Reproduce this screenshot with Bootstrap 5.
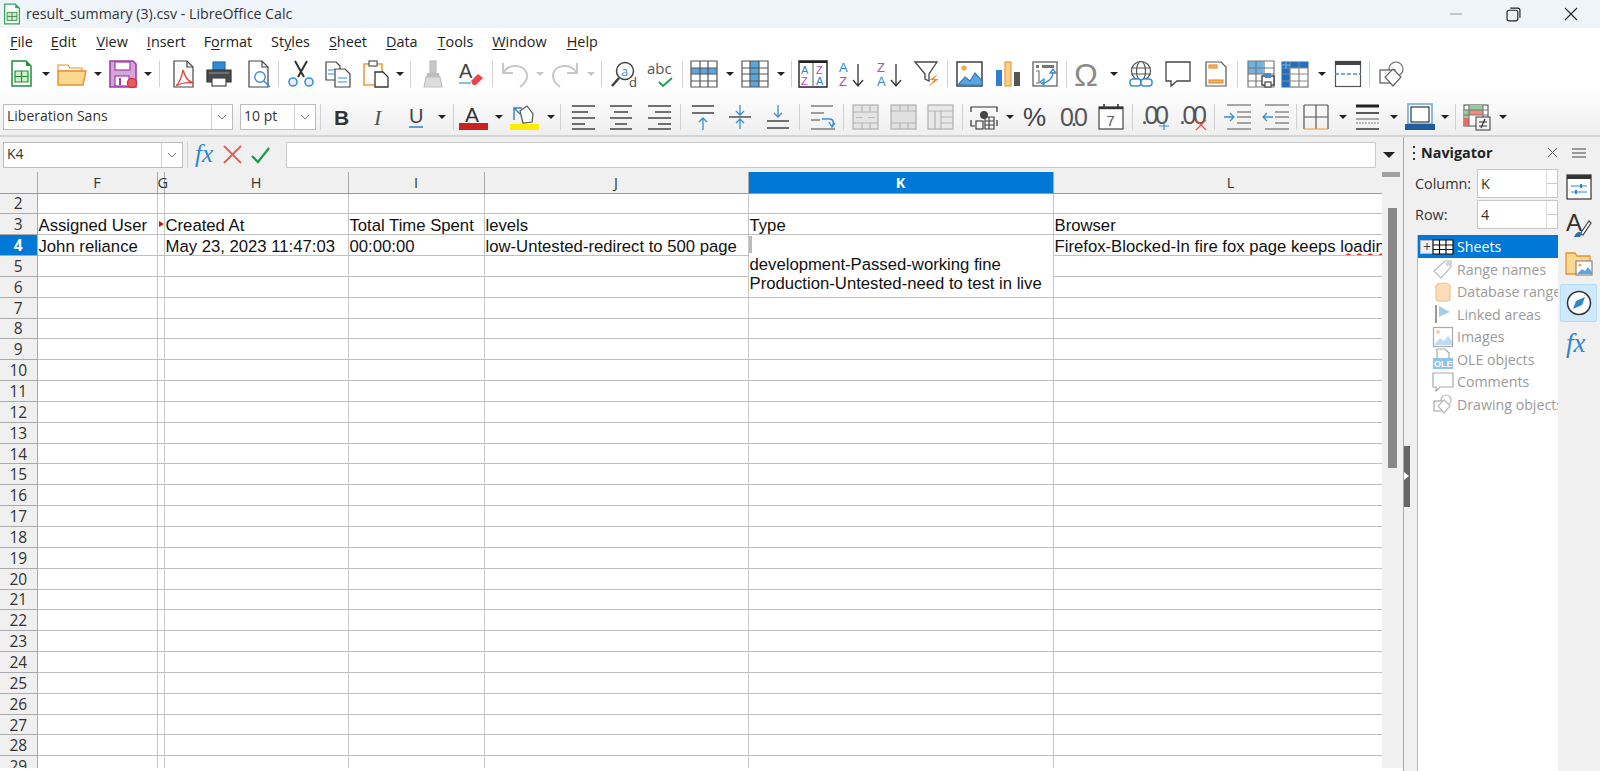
<!DOCTYPE html>
<html lang="en"><head><meta charset="utf-8"><title>result_summary (3).csv - LibreOffice Calc</title>
<link href="https://cdn.jsdelivr.net/npm/bootstrap@5.3.0/dist/css/bootstrap.min.css" rel="stylesheet">
<style>
html,body{height:771px;overflow:hidden;background:#fff;color:#222;font-family:"Open Sans","Noto Sans",sans-serif}
.titlebar{height:28px;background:#eff4fa;font-size:14.2px;padding-left:3px}
.titlebar .ttl{margin-left:5px;color:#333}
.tapp{width:18px;height:22px;flex:none}
.wins{margin-left:auto;padding-right:22px;gap:43px}
.chrome{height:109px;background:linear-gradient(#fff 55%,#efefef);border-bottom:2px solid #d4d4d4}
.menubar{height:28px;font-size:14.4px;padding-left:10px;gap:0}
.menubar span{color:#222}
.menubar u{text-underline-offset:2px}
.tb{height:36px}
.tb2{height:45px;padding-top:5px}
.ic{width:26px;height:26px;flex:none;overflow:visible;fill:none;stroke-width:1.2}
.ic text{stroke:none}
.dn{flex:none;width:0;height:0;border-left:4px solid transparent;border-right:4px solid transparent;border-top:4px solid #222}
.dn.off{border-top-color:#c6c6c6}
.vs{flex:none;width:1px;height:26px;background:#d0d0d0}
.gm2{margin-left:-2px}.g2{margin-left:2px}
.g4{margin-left:4px}.g5{margin-left:5px}.g6{margin-left:6px}.g7{margin-left:7px}.g8{margin-left:8px}.g9{margin-left:9px}.g10{margin-left:10px}.g11{margin-left:11px}.g12{margin-left:12px}.g13{margin-left:13px}.g14{margin-left:14px}
.combo{height:26px;background:#fff;border:1px solid #bdbdbd;font-size:14px;color:#333;flex:none}
.combo .val{flex:1;padding-left:3px;white-space:nowrap;overflow:hidden}
.combo .drop{width:21px;border-left:1px solid #d0d0d0}
.c-font{width:230px;margin-left:3px}.c-size{width:76px}.c-name{width:180px;margin-left:3px}
.work{height:634px}
.left-col{width:1403px;flex:none}
.fbar{height:35px;background:#f0f0f0}
.finput{width:1090px;height:26px;background:#fff;border:1px solid #c8c8c8;border-radius:1px}
.gridwrap{width:1382px;height:596px;flex:none}
.scrollv{width:21px;background:#f0f0f0;padding-left:6px}
.scrollv .stop{height:5px;width:18px;margin-left:-6px;background:#a0a0a0}
.scrollv .thumb{width:9px;height:260px;margin-top:31px;background:#888}
table.sheet{table-layout:fixed;width:1382px;border-collapse:collapse;margin:0;font-family:"Liberation Sans",Arial,sans-serif;font-size:16.7px;color:#111;--bs-table-bg:transparent}
table.sheet th,table.sheet td{padding:2px 0 0 1px;border:0;border-right:1px solid #c8c8c8;border-bottom:1px solid #c0c0c0;height:20.85px;line-height:17px;white-space:nowrap;overflow:hidden;vertical-align:middle;font-weight:400}
table.sheet thead th{height:21px;background:#f0f0f0;text-align:center;padding:0;font-family:"Open Sans",sans-serif;font-size:14.5px;color:#333;border-bottom:1px solid #999;border-right:1px solid #aaa}
table.sheet thead th.spill{overflow:visible;font-size:14.5px}
table.sheet thead th.wide{padding-left:26px}
table.sheet tbody th{background:#f0f0f0;text-align:center;padding:1px 0 0;font-family:"Open Sans",sans-serif;font-size:15.5px;color:#333;border-right:1px solid #aaa;border-bottom:1px solid #aaa}
table.sheet .act,table.sheet tbody th.act,table.sheet thead th.act{background:#0078d7;color:#fff;font-weight:700}
table.sheet td.tall{vertical-align:top;padding-top:1px;line-height:19px}
.caretbar{display:inline-block;width:3px;height:17px;background:#bbb;margin-left:-1px;vertical-align:top}
.wavy{text-decoration:underline wavy #e5322c 1.5px;text-underline-offset:1px}
.flag{position:relative}
.flag::before{content:"";position:absolute;right:0;top:7px;border-left:5px solid #d01010;border-top:3.5px solid transparent;border-bottom:3.5px solid transparent}
.side{width:197px;flex:none;background:#f0f0f0;border-left:1px solid #aaa;position:relative;height:634px}
.grip{position:absolute;left:0;top:309px;width:6px;height:61px;background:#666}
.grip::after{content:"";position:absolute;left:0;top:26px;border-left:5px solid #fff;border-top:4px solid transparent;border-bottom:4px solid transparent}
.deck{width:154px;flex:none}
.deckhead{height:31px;padding-left:9px;font-size:14.4px;font-weight:700;color:#222}
.dots{width:2px;height:14px;margin-right:6px;background:repeating-linear-gradient(#333 0 2px,transparent 2px 6px)}
.deckbody{padding-left:11px;height:603px}
.frow{height:31px;font-size:14.4px;color:#333}
.frow label{width:62px}
.spin{width:82px;height:29px;background:#fff;border:1px solid #c8c8c8;padding-left:3px;margin-left:1px;position:relative}
.spin::after{content:"";position:absolute;right:0;top:0;bottom:0;width:11px;border-left:1px solid #ddd;background:linear-gradient(#fff 47%,#ccc 47%,#ccc 53%,#fff 53%)}
.tree{flex:1;width:142px;margin:5px 0 -60px 2px;background:#fff;border-left:1px solid #bbb;font-size:14.2px;color:#9b9b9b}
.tree .leaf{height:22.5px;padding-left:15px;gap:4px;white-space:nowrap;overflow:hidden}
.tree .sel{background:#0078d7;color:#fff;padding-left:2px;height:23px}
.tree .ic{width:20px;height:20px}
.pm{width:14px;height:14px;background:#eee;border:1px solid #bbb;color:#444;font-size:14px;line-height:11px;text-align:center;flex:none;margin-right:-5px}
.tabs{width:42px;flex:none;gap:0}
.tabs .cell{height:38px;width:37px;margin-left:2px;flex:none}
.tabs .on{background:#cde8ff;border:1px solid #b4dcfb;border-radius:2px;margin-top:2px;margin-bottom:3px}
.tabhead{height:31px;width:42px}
.c0{width:37px}.c1{width:120px}.c2{width:7px}.c3{width:184px}.c4{width:136px}.c5{width:264px}.c6{width:305px}.c7{width:329px}
.mi-file{margin-right:18px}.mi-view{margin-left:20px}.mi-ins{margin-left:19px}.mi-for{margin-left:18px}.mi-sty{margin-left:19px}.mi-she{margin-left:19px}.mi-dat{margin-left:19px}.mi-too{margin-left:20px}.mi-win{margin-left:19px}.mi-hel{margin-left:20px}
.tri-big{border-left-width:6px;border-right-width:6px;border-top-width:6px}
</style></head><body>
<div class="d-flex flex-column">
<div class="titlebar d-flex align-items-center">
<svg class="tapp" viewBox="2 0 22 26" fill="none"><path d="M4 1h13l5 5v19H4z" fill="#fff" stroke="#34a853" stroke-width="1.6"/><path d="M17 1l5 5h-5z" fill="#34a853"/><path d="M7 11h12v10H7zM7 16h12M13 11v10" stroke="#2f7d45" fill="#cfe8c8"/></svg>
<span class="ttl">result_summary (3).csv - LibreOffice Calc</span>
<div class="wins d-flex align-items-center">
<svg width="14" height="14" viewBox="0 0 14 14" fill="none" stroke="#999"><path d="M1 7h12"/></svg>
<svg width="15" height="15" viewBox="0 0 14 14" fill="none" stroke="#222" stroke-width="1.1"><rect x="1" y="3" width="10" height="10" rx="2"/><path d="M4 1h7a2 2 0 0 1 2 2v7"/></svg>
<svg width="14" height="14" viewBox="0 0 14 14" fill="none" stroke="#222" stroke-width="1.1"><path d="M1 1l12 12M13 1L1 13"/></svg>
</div></div>
<div class="chrome">
<div class="menubar d-flex align-items-center">
<span class="mi-file"><u>F</u>ile</span><span><u>E</u>dit</span><span class="mi-view"><u>V</u>iew</span><span class="mi-ins"><u>I</u>nsert</span><span class="mi-for">F<u>o</u>rmat</span><span class="mi-sty">St<u>y</u>les</span><span class="mi-she"><u>S</u>heet</span><span class="mi-dat"><u>D</u>ata</span><span class="mi-too"><u>T</u>ools</span><span class="mi-win"><u>W</u>indow</span><span class="mi-hel"><u>H</u>elp</span>
</div>
<div class="tb d-flex align-items-center ps-2">
<svg class="ic" viewBox="0 0 26 26"><path d="M4 0h14l5 5v20H4z" fill="#fff" stroke="#1e8f3a" stroke-width="1.5"/><path d="M18 0l5 5h-5z" fill="#1e8f3a"/><path d="M7 10h13v11H7z" fill="#d5ebcf" stroke="#1e8f3a"/><path d="M7 15.5h13M13.5 10v11" stroke="#1e8f3a"/></svg>
<i class="dn g8"></i>
<svg class="ic g9" viewBox="0 0 26 26"><path d="M-1 4h10l2 3h12v3H-1z" fill="#fff" stroke="#e8912d"/><path d="M-1 10h28l-3 14H-1z" fill="#fbd88f" stroke="#e8912d" stroke-width="1.4"/></svg>
<i class="dn g9"></i>
<svg class="ic g8" viewBox="0 0 26 26"><path d="M0 0h23l3 3v23H0z" fill="#d4a5d9" stroke="#a03ea8" stroke-width="1.6"/><rect x="5" y="1" width="15" height="8" fill="#fff" stroke="#a03ea8"/><rect x="5" y="15" width="14" height="10" fill="#fff" stroke="#a03ea8"/><path d="M10 17v7" stroke="#a03ea8" stroke-width="2"/><circle cx="22" cy="22" r="4.6" fill="#f0565b" stroke="#c8323a"/></svg>
<i class="dn g8"></i><i class="vs g7"></i>
<svg class="ic g11" viewBox="0 0 26 26"><path d="M3 0h13l6 6v20H3z" fill="#fff" stroke="#444"/><path d="M16 0v6h6" stroke="#444"/><path d="M12 9c2 6 4 11 10 13-6-1-12 0-17 3 4-4 6-10 7-16z" stroke="#e04a3f" stroke-width="1.4"/></svg>
<svg class="ic g9" viewBox="0 0 26 26"><rect x="7" y="1" width="12" height="8" fill="#2e8bd6" stroke="#1d6fb3"/><path d="M1 9h24v12H1z" fill="#4a4a4a" stroke="#333"/><rect x="6" y="17" width="14" height="8" fill="#fff" stroke="#444"/><path d="M3 12h20" stroke="#888"/></svg>
<svg class="ic g14" viewBox="0 0 26 26"><path d="M3 0h13l6 6v20H3z" fill="#fff" stroke="#444"/><path d="M16 0v6h6" stroke="#444"/><circle cx="14" cy="16" r="5.2" stroke="#3a8fd6" stroke-width="1.4"/><path d="M18 20l6 6" stroke="#3a8fd6" stroke-width="1.6"/></svg>
<i class="vs g6"></i>
<svg class="ic g9" viewBox="0 0 26 26"><path d="M7 0l9 16M19 0L10 16" stroke="#333" stroke-width="2"/><circle cx="5" cy="21" r="4" fill="#e4f0fa" stroke="#3a8fd6" stroke-width="1.6"/><circle cx="21" cy="21" r="4" fill="#e4f0fa" stroke="#3a8fd6" stroke-width="1.6"/></svg>
<svg class="ic g11" viewBox="0 0 26 26"><path d="M1 1h10l4 4v14H1z" fill="#fff" stroke="#444"/><path d="M10 8h10l5 5v13H10z" fill="#fff" stroke="#444"/><path d="M3 9h7M3 13h7" stroke="#3a8fd6"/><path d="M13 17h9M13 21h9" stroke="#3a8fd6"/></svg>
<svg class="ic g12" viewBox="0 0 26 26"><path d="M1 3h18v21H1z" fill="#fff" stroke="#ef9a3c" stroke-width="1.6"/><rect x="6" y="0" width="8" height="5" fill="#fff" stroke="#555"/><path d="M12 11h8l5 5v10H12z" fill="#fff" stroke="#333" stroke-width="1.3"/></svg>
<i class="dn g7"></i><i class="vs g6"></i>
<svg class="ic g9" viewBox="0 0 26 26"><rect x="10" y="0" width="6" height="12" fill="#c8c8c8" stroke="#bbb"/><path d="M7 12h12l1 4H6z" fill="#bdbdbd"/><path d="M6 16h14l2 10H4z" fill="#dcdcdc" stroke="#c0c0c0"/></svg>
<svg class="ic g12" viewBox="0 0 26 26"><text x="1" y="17" font-family="Liberation Sans" font-size="20" fill="#444">A</text><path d="M1 22h12" stroke="#3a8fd6"/><path d="M13 20l7-7 5 4-7 7h-3z" fill="#e8434a"/></svg>
<i class="vs g8"></i>
<svg class="ic g9" viewBox="0 0 26 26"><path d="M1 2v10h10" stroke="#c8c8c8" stroke-width="2"/><path d="M1 12C7 2 22 3 25 13c1 5-2 9-7 13" stroke="#c8c8c8" stroke-width="2"/></svg>
<i class="dn off g8"></i>
<svg class="ic g8" viewBox="0 0 26 26"><path d="M25 2v10H15" stroke="#c8c8c8" stroke-width="2"/><path d="M25 12C19 2 4 3 1 13c-1 5 2 9 7 13" stroke="#c8c8c8" stroke-width="2"/></svg>
<i class="dn off g9"></i><i class="vs g6"></i>
<svg class="ic g9" viewBox="0 0 26 26"><circle cx="14" cy="10" r="8.5" stroke="#444" stroke-width="1.5"/><path d="M8 17L1 25" stroke="#444" stroke-width="2.6"/><text x="10" y="15" font-family="Open Sans" font-size="13" fill="#3a8fd6">a</text><text x="18" y="26" font-family="Open Sans" font-size="13" fill="#444">d</text></svg>
<svg class="ic g11" viewBox="0 0 26 26"><text x="-1" y="13" font-family="Open Sans" font-size="15" fill="#555">abc</text><path d="M11 21l4 4 9-8" stroke="#22a352" stroke-width="2"/></svg>
<i class="vs g8"></i>
<svg class="ic g8" viewBox="0 0 26 26"><rect x="0" y="7" width="26" height="6" fill="#5ba6df"/><path d="M0 0h26v26H0zM0 7h26M0 13h26M0 20h26M9 0v26M17 0v26" stroke="#555"/></svg>
<i class="dn g9"></i>
<svg class="ic g8" viewBox="0 0 26 26"><rect x="8" y="0" width="9" height="26" fill="#5ba6df"/><path d="M0 0h26v26H0zM0 7h26M0 13h26M0 20h26M8 0v26M17 0v26" stroke="#555"/></svg>
<i class="dn g9"></i><i class="vs g6"></i>
<svg class="ic g8" viewBox="0 0 26 26"><path d="M-1 0h28v26H-1z" fill="#fff" stroke="#222" stroke-width="1.4"/><path d="M-1 1h28" stroke="#222" stroke-width="2"/><path d="M13 2v24" stroke="#777"/><text x="1" y="13" font-size="11" font-family="Liberation Sans" fill="#2b86cf">A</text><text x="1" y="24" font-size="11" font-family="Liberation Sans" fill="#b14cc1">Z</text><text x="16" y="13" font-size="11" font-family="Liberation Sans" fill="#b14cc1">Z</text><text x="16" y="24" font-size="11" font-family="Liberation Sans" fill="#2b86cf">A</text></svg>
<svg class="ic g13" viewBox="0 0 26 26"><text x="0" y="11" font-size="13" font-family="Liberation Sans" fill="#2b86cf">A</text><text x="0" y="25" font-size="13" font-family="Liberation Sans" fill="#b14cc1">Z</text><path d="M19 3v21M14 19l5 6 5-6" stroke="#333" stroke-width="1.3"/></svg>
<svg class="ic g12" viewBox="0 0 26 26"><text x="0" y="11" font-size="13" font-family="Liberation Sans" fill="#b14cc1">Z</text><text x="0" y="25" font-size="13" font-family="Liberation Sans" fill="#2b86cf">A</text><path d="M19 3v21M14 19l5 6 5-6" stroke="#333" stroke-width="1.3"/></svg>
<svg class="ic g11" viewBox="0 0 26 26"><path d="M1 1h22l-8 12v7l-4-2v-5z" stroke="#444" stroke-width="1.3"/><path d="M24 13l-9 6h5l-6 7 11-8h-5z" fill="#f0913c"/></svg>
<i class="vs g7"></i>
<svg class="ic g9" viewBox="0 0 26 26"><rect x="0" y="1" width="25" height="24" fill="#fff" stroke="#222" stroke-width="1.3"/><circle cx="7" cy="7" r="2.6" fill="#f5a54a"/><path d="M1 24l7-8 5 4 5-8 7 8v4z" fill="#5ba6df" stroke="#2f7fc0"/></svg>
<svg class="ic g11" viewBox="0 0 26 26"><rect x="2" y="9" width="6" height="16" fill="#2e7fd1"/><rect x="11" y="1" width="6" height="24" fill="#fbd08e" stroke="#ef9a3c"/><rect x="20" y="11" width="6" height="14" fill="#555"/></svg>
<svg class="ic g12" viewBox="0 0 26 26"><rect x="1" y="1" width="24" height="24" fill="#fff" stroke="#555" stroke-width="1.2"/><path d="M4 4h3v3H4zM10 4h12v3H10z" fill="#777"/><path d="M4 10h3v12H4" stroke="#777"/><path d="M10 22a11 11 0 0 0 11-11M21 8l-3 4h6zM8 21l4-3v6z" stroke="#3a8fd6" stroke-width="1.3"/></svg>
<i class="vs g8"></i>
<svg class="ic g8" viewBox="0 0 26 26"><text x="-1" y="25" font-family="Liberation Sans" font-size="32" fill="#8a8a8a">Ω</text></svg>
<i class="dn g9"></i>
<svg class="ic g10" viewBox="0 0 26 26"><circle cx="13" cy="10" r="9.5" stroke="#555"/><ellipse cx="13" cy="10" rx="4.5" ry="9.5" stroke="#555"/><path d="M3 7h20M3 13h20" stroke="#555"/><rect x="2" y="18" width="11" height="7" rx="3" fill="#fff" stroke="#3a8fd6" stroke-width="1.5"/><rect x="13" y="18" width="11" height="7" rx="3" fill="#fff" stroke="#3a8fd6" stroke-width="1.5"/></svg>
<svg class="ic g11" viewBox="0 0 26 26"><path d="M1 1h24v19H12l-6 5v-5H1z" fill="#fff" stroke="#444" stroke-width="1.3"/></svg>
<svg class="ic g12" viewBox="0 0 26 26"><path d="M3 1h15l5 5v19H3z" fill="#fff" stroke="#555"/><rect x="6" y="4" width="8" height="3" fill="#f4b26a" stroke="#e8912d"/><rect x="6" y="19" width="14" height="3" fill="#f4b26a" stroke="#e8912d"/></svg>
<i class="vs g8"></i>
<svg class="ic g10" viewBox="0 0 26 26"><path d="M0 0h15v13H0z" fill="#6fb2e4"/><path d="M0 0h26v26H0zM0 7h26M0 13h26M0 20h26M8 0v26M16 0v26" stroke="#777"/><rect x="14" y="15" width="12" height="9" fill="#fff" stroke="#444" stroke-width="1.4"/><rect x="17" y="12" width="6" height="5" fill="#3a8fd6"/><rect x="17" y="21" width="6" height="5" fill="#fff" stroke="#444"/></svg>
<svg class="ic g8" viewBox="0 0 26 26"><rect x="0" y="1" width="26" height="25" fill="#fff" stroke="#777"/><rect x="0" y="1" width="26" height="6" fill="#1f6fc0"/><rect x="0" y="1" width="8" height="25" fill="#1f6fc0"/><path d="M0 7h26M0 13h26M0 20h26M8 1v25M17 1v25" stroke="#888"/><path d="M4 0v8M0 4h8" stroke="#5ba6df" stroke-width="1.6"/></svg>
<i class="dn g10"></i>
<svg class="ic g9" viewBox="0 0 26 26"><rect x="0.5" y="0.5" width="25" height="25" fill="#fff" stroke="#555"/><rect x="0" y="0" width="26" height="4" fill="#444"/><path d="M0 13h26" stroke="#4a90d0" stroke-width="1.6" stroke-dasharray="4 2"/></svg>
<i class="vs g8"></i>
<svg class="ic g9" viewBox="0 0 26 26"><circle cx="17" cy="8" r="7" fill="#fff" stroke="#666"/><rect x="1" y="9" width="15" height="13" fill="#fff" stroke="#555"/><path d="M14 8l8 8-8 9-8-9z" fill="#fff" stroke="#666"/></svg>
</div>
<div class="tb2 d-flex align-items-center">
<div class="combo c-font d-flex"><span class="val">Liberation Sans</span><span class="drop d-flex align-items-center justify-content-center"><svg width="10" height="6" viewBox="0 0 10 6" fill="none" stroke="#777"><path d="M1 1l4 4 4-4"/></svg></span></div>
<div class="combo c-size g7 d-flex"><span class="val">10 pt</span><span class="drop d-flex align-items-center justify-content-center"><svg width="10" height="6" viewBox="0 0 10 6" fill="none" stroke="#777"><path d="M1 1l4 4 4-4"/></svg></span></div>
<i class="vs g4"></i>
<svg class="ic g7" viewBox="0 0 26 26"><text x="6" y="21" font-family="Liberation Sans" font-weight="700" font-size="21" fill="#333">B</text></svg>
<svg class="ic g12" viewBox="0 0 26 26"><text x="8" y="21" font-family="Liberation Serif" font-style="italic" font-size="22" fill="#555">I</text></svg>
<svg class="ic g11" viewBox="0 0 26 26"><text x="6" y="19" font-family="Liberation Sans" font-size="20" fill="#444">U</text><path d="M6 23h14" stroke="#2e7fd1" stroke-width="1.5"/></svg>
<i class="dn g9"></i><i class="vs g7"></i>
<svg class="ic g6" viewBox="0 0 26 26"><text x="5" y="18" font-family="Liberation Sans" font-size="21" fill="#333">A</text><rect x="-1" y="19" width="29" height="7" fill="#c9211e"/></svg>
<i class="dn g9"></i>
<svg class="ic g8" viewBox="0 0 26 26"><path d="M9 7l7-5 6 8-1 8-9 1z" fill="#fff" stroke="#555"/><path d="M3 16V4h8M3 4l6 6" stroke="#2e7fd1" stroke-width="1.4"/><rect x="-1" y="20" width="29" height="6" fill="#ffed00"/></svg>
<i class="dn g10"></i><i class="vs g5"></i>
<svg class="ic g10" viewBox="0 0 26 26"><path d="M1 2h23M1 8h16M1 14h23M1 20h13M1 25h23" stroke="#444" stroke-width="1.3"/></svg>
<svg class="ic g11" viewBox="0 0 26 26"><path d="M2 2h22M6 8h14M2 14h22M7 20h12M2 25h22" stroke="#444" stroke-width="1.3"/></svg>
<svg class="ic g12" viewBox="0 0 26 26"><path d="M2 2h23M9 8h16M2 14h23M12 20h13M2 25h23" stroke="#444" stroke-width="1.3"/></svg>
<i class="vs g8"></i>
<svg class="ic g9" viewBox="0 0 26 26"><path d="M2 2h22M2 9h22" stroke="#444" stroke-width="1.4"/><path d="M13 26V14M9 18l4-4 4 4" stroke="#3a8fd6" stroke-width="1.3"/></svg>
<svg class="ic g11" viewBox="0 0 26 26"><path d="M2 13h22" stroke="#444" stroke-width="1.4"/><path d="M13 1v9M9 7l4 4 4-4M13 25v-9M9 19l4-4 4 4" stroke="#3a8fd6" stroke-width="1.3"/></svg>
<svg class="ic g12" viewBox="0 0 26 26"><path d="M2 17h22M2 24h22" stroke="#444" stroke-width="1.4"/><path d="M13 1v12M9 9l4 4 4-4" stroke="#3a8fd6" stroke-width="1.3"/></svg>
<i class="vs g8"></i>
<svg class="ic g10" viewBox="0 0 26 26"><path d="M1 2h22M1 9h13M1 16h9M1 25h24" stroke="#444" stroke-width="1.2"/><path d="M12 15h8c4 0 4 6 2 7M19 18l3 5 3-4" stroke="#3a8fd6" stroke-width="1.4"/></svg>
<i class="vs g7"></i>
<svg class="ic g9" viewBox="0 0 26 26"><rect x="0" y="1" width="25" height="24" fill="#e4e4e4" stroke="#b4b4b4" stroke-width="1.3"/><path d="M0 8h25M0 19h25M9 1v7M17 1v7M9 19v6M17 19v6" stroke="#b4b4b4"/><path d="M3 13.5h7M15 13.5h7" stroke="#bbb"/></svg>
<svg class="ic g12" viewBox="0 0 26 26"><rect x="0" y="1" width="25" height="24" fill="#e0e0e0" stroke="#b4b4b4" stroke-width="1.3"/><path d="M0 7h25M0 19h25M9 1v6M17 1v6M9 19v6M17 19v6" stroke="#b4b4b4"/></svg>
<svg class="ic g11" viewBox="0 0 26 26"><rect x="0" y="1" width="25" height="24" fill="#e8e8e8" stroke="#b4b4b4" stroke-width="1.3"/><path d="M0 7h25M7 7v18M13 7v18M13 13h12M13 19h12" stroke="#b4b4b4"/></svg>
<i class="vs g8"></i>
<svg class="ic g8" viewBox="0 0 26 26"><path d="M0 8V3h26v5M0 16v6h4M26 16v6" stroke="#333" stroke-width="1.2"/><circle cx="13" cy="11" r="4" fill="#444"/><rect x="5" y="17" width="7" height="8" stroke="#444"/><path d="M14 13h9v12h-9zM14 17h9M14 21h9M18 13v12" stroke="#444"/></svg>
<i class="dn g9"></i>
<svg class="ic g9" viewBox="0 0 26 26"><text x="0" y="22" font-family="Liberation Sans" font-size="26" fill="#444" textLength="24">%</text></svg>
<svg class="ic g12" viewBox="0 0 26 26"><text x="-1" y="22" font-family="Liberation Sans" font-size="25" fill="#555" textLength="28">0.0</text></svg>
<svg class="ic g11" viewBox="0 0 26 26"><rect x="1" y="3" width="24" height="22" fill="#fff" stroke="#444" stroke-width="1.2"/><path d="M1 4h24" stroke="#333" stroke-width="2.4"/><path d="M6 0v5M20 0v5" stroke="#333" stroke-width="1.6"/><text x="8.5" y="22" font-family="Liberation Sans" font-size="15" fill="#555">7</text></svg>
<i class="vs g8"></i>
<svg class="ic g9" viewBox="0 0 26 26"><text x="-1" y="20" font-family="Liberation Sans" font-size="25" fill="#555" textLength="28">.00</text><path d="M22 17v9M17 22h10" stroke="#3a8fd6"/></svg>
<svg class="ic g12" viewBox="0 0 26 26"><text x="-1" y="20" font-family="Liberation Sans" font-size="25" fill="#555" textLength="28">.00</text><path d="M16 16l10 10M26 16L16 26" stroke="#e8564f" stroke-width="1.3"/></svg>
<i class="vs g8"></i>
<svg class="ic g9" viewBox="0 0 26 26"><path d="M3 1h24M13 8h14M13 13h14M13 19h14M3 25h24" stroke="#555"/><path d="M0 13h9M6 9l4 4-4 4" stroke="#3a8fd6" stroke-width="1.3"/></svg>
<svg class="ic g12" viewBox="0 0 26 26"><path d="M3 1h24M13 8h14M13 13h14M13 19h14M3 25h24" stroke="#555"/><path d="M11 13H1M5 9l-4 4 4 4" stroke="#3a8fd6" stroke-width="1.3"/></svg>
<i class="vs g8"></i>
<svg class="ic g6" viewBox="0 0 26 26"><path d="M1 1v24M25 1v24M1 1h24M1 13h24M13 1v24" stroke="#555" stroke-width="1.2"/><path d="M1 25h24" stroke="#f0a050" stroke-width="1.2"/></svg>
<i class="dn g10"></i>
<svg class="ic g8" viewBox="0 0 26 26"><path d="M1 2h23" stroke="#222" stroke-width="3"/><path d="M1 9h23" stroke="#333" stroke-width="1.6"/><path d="M1 15h23" stroke="#777"/><path d="M1 19h23" stroke="#888" stroke-dasharray="2 1"/><path d="M1 25h23" stroke="#333" stroke-width="1.5"/></svg>
<i class="dn g9"></i>
<svg class="ic g8" viewBox="0 0 26 26"><rect x="2" y="0" width="24" height="20" fill="#fff" stroke="#5b9fd8" stroke-width="1.4"/><rect x="5" y="3" width="18" height="15" stroke="#333"/><rect x="-1" y="20" width="30" height="6" fill="#1f5d9c"/></svg>
<i class="dn g9"></i><i class="vs g6"></i>
<svg class="ic g8" viewBox="0 0 26 26"><rect x="0" y="1" width="24" height="21" fill="#fff" stroke="#666"/><rect x="5" y="1" width="14" height="5" fill="#8fcf9a"/><rect x="5" y="6" width="14" height="5" fill="#f08a80"/><rect x="0" y="6" width="5" height="8" fill="#8fcf9a"/><rect x="0" y="14" width="5" height="8" fill="#f06a60"/><path d="M0 6h24M0 11h24M5 1v21M19 1v21" stroke="#777"/><rect x="12" y="13" width="14" height="13" fill="#f4f4f4" stroke="#555"/><path d="M15 18h8M15 22h8M21 15l-4 9" stroke="#333"/></svg>
<i class="dn g9"></i>
</div>
</div>
<div class="work d-flex">
<div class="left-col d-flex flex-column">
<div class="fbar d-flex align-items-center">
<div class="combo c-name d-flex"><span class="val">K4</span><span class="drop d-flex align-items-center justify-content-center"><svg width="10" height="6" viewBox="0 0 10 6" fill="none" stroke="#777"><path d="M1 1l4 4 4-4"/></svg></span></div>
<i class="vs g4"></i>
<svg class="ic g7" viewBox="0 0 26 26"><text x="0" y="20" font-family="Liberation Serif" font-style="italic" font-size="25" fill="#2e86cf">fx</text></svg>
<svg class="ic gm2" viewBox="0 0 26 26"><path d="M5 4l17 17M22 4L5 21" stroke="#ea5a55" stroke-width="1.8"/></svg>
<svg class="ic g2" viewBox="0 0 26 26"><path d="M5 14l6 6 11-14" stroke="#1f9d4d" stroke-width="2.3"/></svg>
<div class="finput g13"></div>
<i class="dn g7 tri-big"></i>
</div>
<div class="d-flex">
<div class="gridwrap overflow-hidden">
<table class="table sheet">
<colgroup><col class="c0"><col class="c1"><col class="c2"><col class="c3"><col class="c4"><col class="c5"><col class="c6"><col class="c7"></colgroup>
<thead><tr><th></th><th>F</th><th class="spill">G</th><th>H</th><th>I</th><th>J</th><th class="act">K</th><th class="wide">L</th></tr></thead>
<tbody>
<tr><th>2</th><td></td><td></td><td></td><td></td><td></td><td></td><td></td></tr>
<tr><th>3</th><td>Assigned User</td><td class="flag"></td><td>Created At</td><td>Total Time Spent</td><td>levels</td><td>Type</td><td>Browser</td></tr>
<tr><th class="act">4</th><td>John reliance</td><td></td><td>May 23, 2023 11:47:03</td><td>00:00:00</td><td>low-Untested-redirect to 500 page</td><td class="tall" rowspan="3"><span class="caretbar"></span><br>development-Passed-working fine<br>Production-Untested-need to test in live</td><td>Firefox-Blocked-In fire fox page keeps <span class="wavy">loading</span></td></tr>
<tr><th>5</th><td></td><td></td><td></td><td></td><td></td><td></td></tr>
<tr><th>6</th><td></td><td></td><td></td><td></td><td></td><td></td></tr>
<tr><th>7</th><td></td><td></td><td></td><td></td><td></td><td></td><td></td></tr>
<tr><th>8</th><td></td><td></td><td></td><td></td><td></td><td></td><td></td></tr>
<tr><th>9</th><td></td><td></td><td></td><td></td><td></td><td></td><td></td></tr>
<tr><th>10</th><td></td><td></td><td></td><td></td><td></td><td></td><td></td></tr>
<tr><th>11</th><td></td><td></td><td></td><td></td><td></td><td></td><td></td></tr>
<tr><th>12</th><td></td><td></td><td></td><td></td><td></td><td></td><td></td></tr>
<tr><th>13</th><td></td><td></td><td></td><td></td><td></td><td></td><td></td></tr>
<tr><th>14</th><td></td><td></td><td></td><td></td><td></td><td></td><td></td></tr>
<tr><th>15</th><td></td><td></td><td></td><td></td><td></td><td></td><td></td></tr>
<tr><th>16</th><td></td><td></td><td></td><td></td><td></td><td></td><td></td></tr>
<tr><th>17</th><td></td><td></td><td></td><td></td><td></td><td></td><td></td></tr>
<tr><th>18</th><td></td><td></td><td></td><td></td><td></td><td></td><td></td></tr>
<tr><th>19</th><td></td><td></td><td></td><td></td><td></td><td></td><td></td></tr>
<tr><th>20</th><td></td><td></td><td></td><td></td><td></td><td></td><td></td></tr>
<tr><th>21</th><td></td><td></td><td></td><td></td><td></td><td></td><td></td></tr>
<tr><th>22</th><td></td><td></td><td></td><td></td><td></td><td></td><td></td></tr>
<tr><th>23</th><td></td><td></td><td></td><td></td><td></td><td></td><td></td></tr>
<tr><th>24</th><td></td><td></td><td></td><td></td><td></td><td></td><td></td></tr>
<tr><th>25</th><td></td><td></td><td></td><td></td><td></td><td></td><td></td></tr>
<tr><th>26</th><td></td><td></td><td></td><td></td><td></td><td></td><td></td></tr>
<tr><th>27</th><td></td><td></td><td></td><td></td><td></td><td></td><td></td></tr>
<tr><th>28</th><td></td><td></td><td></td><td></td><td></td><td></td><td></td></tr>
<tr><th>29</th><td></td><td></td><td></td><td></td><td></td><td></td><td></td></tr>
</tbody></table>
</div>
<div class="scrollv"><div class="stop"></div><div class="thumb"></div></div>
</div>
</div>
<aside class="side d-flex">
<span class="grip"></span>
<div class="deck d-flex flex-column overflow-hidden">
<div class="deckhead d-flex align-items-center"><span class="dots"></span>Navigator<svg class="ms-auto" width="11" height="11" viewBox="0 0 11 11" fill="none" stroke="#555"><path d="M1 1l9 9M10 1l-9 9"/></svg></div>
<div class="deckbody d-flex flex-column">
<div class="frow d-flex align-items-center"><label>Column:</label><div class="spin d-flex align-items-center">K</div></div>
<div class="frow d-flex align-items-center"><label>Row:</label><div class="spin d-flex align-items-center">4</div></div>
<div class="tree">
<div class="leaf sel d-flex align-items-center"><span class="pm">+</span><svg class="ic" viewBox="0 0 20 20"><path d="M0 3h20v14H0zM0 8h20M0 12.5h20M6.5 3v14M13 3v14" stroke="#111" fill="#fff"/></svg><span>Sheets</span></div>
<div class="leaf d-flex align-items-center"><svg class="ic" viewBox="0 0 20 20"><path d="M1 12L12 2h6v6L8 19z" stroke="#bbb"/><circle cx="15" cy="5" r="1.5" stroke="#bbb"/></svg><span>Range names</span></div>
<div class="leaf d-flex align-items-center"><svg class="ic" viewBox="0 0 20 20"><ellipse cx="10" cy="4" rx="7" ry="3" fill="#fbdcb8" stroke="#f4c48e"/><path d="M3 4v13c0 3 14 3 14 0V4" fill="#fbdcb8" stroke="#f4c48e"/></svg><span>Database ranges</span></div>
<div class="leaf d-flex align-items-center"><svg class="ic" viewBox="0 0 20 20"><path d="M3 1v18" stroke="#999" stroke-width="2"/><path d="M6 2l11 6-11 5z" fill="#a8cdec"/></svg><span>Linked areas</span></div>
<div class="leaf d-flex align-items-center"><svg class="ic" viewBox="0 0 20 20"><rect x="0.5" y="0.5" width="19" height="19" fill="#fff" stroke="#aaa"/><circle cx="5" cy="5" r="2" fill="#f9cfa2"/><path d="M1 18l6-7 4 3 4-5 4 5v4z" fill="#bcdcf3"/></svg><span>Images</span></div>
<div class="leaf d-flex align-items-center"><svg class="ic" viewBox="0 0 20 20"><path d="M4 0h8l4 4v8H4z" stroke="#aaa"/><rect x="0" y="9" width="20" height="11" fill="#8ec3ea"/><text x="1" y="18" font-family="Liberation Sans" font-weight="700" font-size="9" fill="#fff">OLE</text></svg><span>OLE objects</span></div>
<div class="leaf d-flex align-items-center"><svg class="ic" viewBox="0 0 20 20"><path d="M0 1h20v14H7l-4 4v-4H0z" stroke="#aaa"/></svg><span>Comments</span></div>
<div class="leaf d-flex align-items-center"><svg class="ic" viewBox="0 0 20 20"><circle cx="13" cy="6" r="5" stroke="#bbb"/><rect x="1" y="7" width="11" height="10" fill="#fff" stroke="#aaa"/><path d="M11 6l6 6-6 7-6-7z" fill="#fff" stroke="#bbb"/></svg><span>Drawing objects</span></div>
</div>
</div>
</div>
<div class="tabs d-flex flex-column align-items-start">
<div class="tabhead d-flex align-items-center justify-content-center"><svg width="14" height="10" viewBox="0 0 14 10" fill="none" stroke="#444"><path d="M0 1h14M0 5h14M0 9h14"/></svg></div>
<div class="cell d-flex align-items-center justify-content-center"><svg class="ic" viewBox="0 0 26 26"><rect x="1" y="1" width="24" height="24" fill="#fff" stroke="#333"/><rect x="1" y="1" width="24" height="4" fill="#333"/><path d="M5 12h16M5 18h16" stroke="#2e86cf"/><path d="M15 10v4M10 16v4" stroke="#2e86cf" stroke-width="2"/></svg></div>
<div class="cell d-flex align-items-center justify-content-center"><svg class="ic" viewBox="0 0 26 26"><text x="0" y="19" font-family="Liberation Sans" font-size="24" fill="#333">A</text><path d="M14 22l9-13 2 2-8 12z" fill="#fff" stroke="#444"/><path d="M8 25c2-5 5-6 8-4l-2 4z" fill="#2e6fb3"/></svg></div>
<div class="cell d-flex align-items-center justify-content-center"><svg class="ic" viewBox="0 0 26 26"><path d="M0 3h9l2 3h13v18H0z" fill="#fbd88f" stroke="#e8912d" stroke-width="1.3"/><rect x="10" y="11" width="16" height="14" fill="#fff" stroke="#888"/><circle cx="14" cy="15" r="1.6" fill="#f5a54a"/><path d="M11 24l5-5 3 2 3-4 4 5v2z" fill="#5ba6df"/></svg></div>
<div class="cell on d-flex align-items-center justify-content-center"><svg class="ic" viewBox="0 0 26 26"><circle cx="13" cy="13" r="11.5" fill="#fff" stroke="#333" stroke-width="1.5"/><path d="M19 7l-3 8-9 4 3-8z" fill="#2e86cf"/></svg></div>
<div class="cell d-flex align-items-center justify-content-center"><svg class="ic" viewBox="0 0 26 26"><text x="0" y="21" font-family="Liberation Serif" font-style="italic" font-size="27" fill="#2e86cf">fx</text></svg></div>
</div>
</aside>
</div>
</div>
</body></html>
